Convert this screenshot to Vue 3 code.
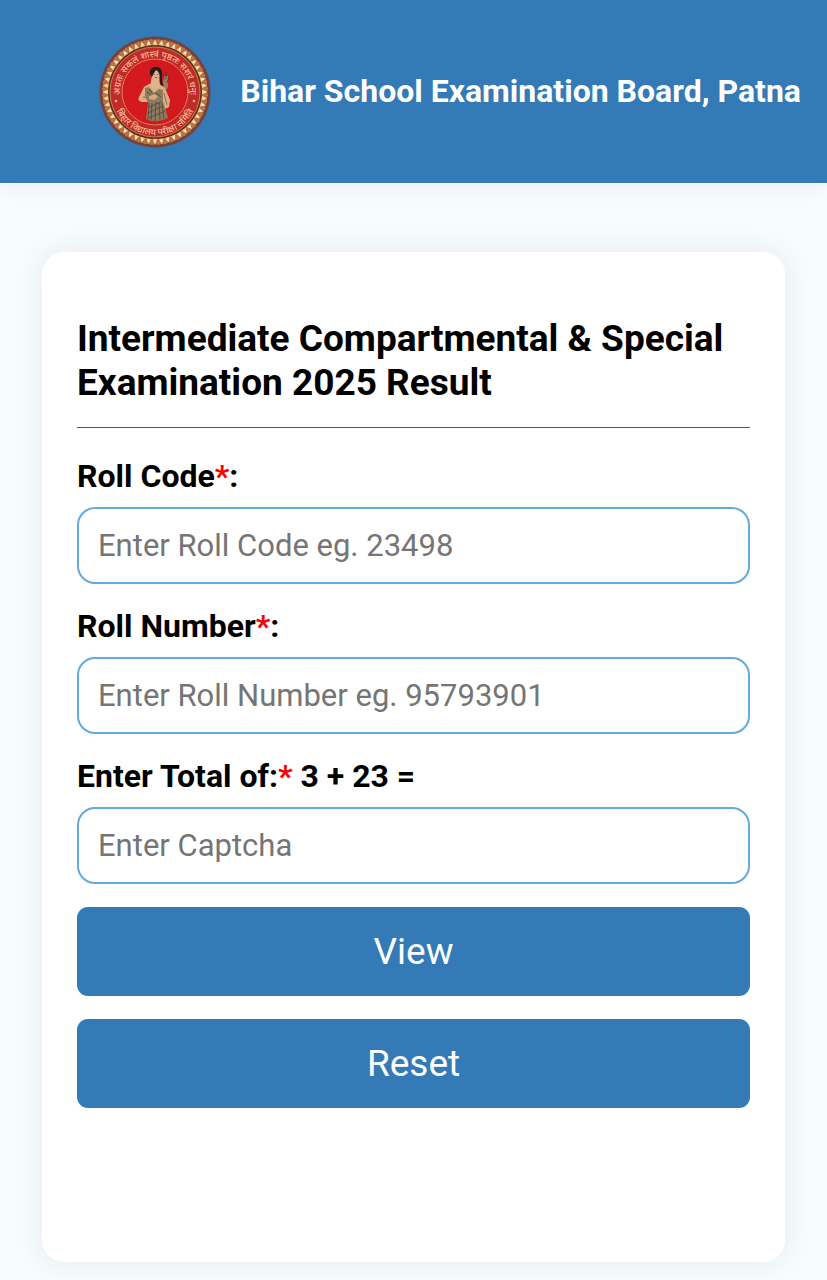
<script setup>
import { ref } from 'vue';

const rollCode = ref('');
const rollNumber = ref('');
const captcha = ref('');

const firstNumber = 3;
const secondNumber = 23;

// small petals of the emblem border
const rimPetals = Array.from({ length: 48 }, (_, i) => (i * 360) / 48);

const resetForm = () => {
  rollCode.value = '';
  rollNumber.value = '';
  captcha.value = '';
};
</script>

<template>
  <div class="page">
    <header class="header">
      <svg class="logo" viewBox="0 0 112 112" role="img" aria-label="Bihar School Examination Board">
        <defs>
          <path id="arc-top" d="M21.5 62 A35 35 0 1 1 90.5 62" />
          <path id="arc-bottom" d="M15.3 70 A43 43 0 0 0 96.7 70" />
        </defs>
        <circle cx="56" cy="56" r="55.5" fill="#75413c" />
        <circle cx="56" cy="56" r="49.5" fill="none" stroke="#b9713f" stroke-width="6" />
        <g v-for="angle in rimPetals" :key="angle" :transform="`rotate(${angle} 56 56)`">
          <path d="M53.6 9 L56 3.6 L58.4 9 Z" fill="#efc794" />
          <circle cx="56" cy="6.6" r="1.1" fill="#fff0d2" />
          <circle cx="59.2" cy="3.8" r="0.9" fill="#b9775c" />
        </g>
        <circle cx="56" cy="56" r="46.8" fill="#5f2f1c" />
        <circle cx="56" cy="56" r="45" fill="#c12a2a" stroke="#c99a55" stroke-width="0.8" />
        <circle cx="56" cy="56" r="33" fill="#d3191e" stroke="#e8795a" stroke-width="1" />
        <text class="motto">
          <textPath href="#arc-top" startOffset="50%" text-anchor="middle">अग्रतः सकलं शास्त्रं पृष्ठतः सशरं धनुः</textPath>
        </text>
        <text class="motto">
          <textPath href="#arc-bottom" startOffset="50%" text-anchor="middle">बिहार विद्यालय परीक्षा समिति</textPath>
        </text>
        <circle cx="17" cy="65" r="1.3" fill="#f0b183" />
        <circle cx="95" cy="65" r="1.3" fill="#f0b183" />
        <!-- quiver -->
        <path d="M63 50 L65 40 L69 40 L69 51 L66 56 Z" fill="#9a7f62" />
        <path d="M65 44 L64 38 M67 43 L67 36 M68 47 L70 41" fill="none" stroke="#4d3a30" stroke-width="0.9" />
        <!-- arms and shoulders -->
        <path d="M50 48 L60 48 L66 52 L71 64 L70 71 L66 73 L62 65 L50 66 L43 66 Q38 65 40 61 L45 51 Z" fill="#dcae83" />
        <path d="M53 40 L60 40 L61 50 L56 54 L51 50 Z" fill="#e0b48b" />
        <path d="M44 61 L52 63 L59 60 M65 57 L68 69" fill="none" stroke="#8c5738" stroke-width="0.8" />
        <!-- robe -->
        <path d="M46 52 L50 51 L55 57 L60 53 L64 54 L64 65 L69 82 Q58 88 47 83 L49 67 L46 60 Z" fill="#8d7b60" />
        <path d="M50 67 L49 83 M53 67 L52 84 M57 66 L56 85 M60 66 L61 84 M63 67 L65 83 M50 71 L62 66 M49 77 L64 70 M50 82 L66 75" fill="none" stroke="#4f4538" stroke-width="0.8" />
        <path d="M48 56 L53 60 L57 57 L62 61 M50 53 L53 57" fill="none" stroke="#5f4b38" stroke-width="1" />
        <!-- hands -->
        <path d="M50 60 L56 58 L59 61 L55 64 L50 63 Z" fill="#d9a97d" />
        <!-- head -->
        <ellipse cx="57" cy="38" rx="4" ry="5.4" fill="#e1b38b" />
        <path d="M51 38 Q50 31 57 31 Q64 31 63 39 Q62 45 65 50 Q60 49 61 43 Q61 36 57 34 Q54 38 53 41 Z" fill="#241b1a" />
        <path d="M54.5 38.5 L56 38.5 M58 38.5 L59.5 38.5 M56 41.6 L58.4 41.6" stroke="#65402d" stroke-width="0.7" />
      </svg>
      <h1>Bihar School Examination Board, Patna</h1>
    </header>

    <main>
      <form class="card" @submit.prevent @reset.prevent="resetForm">
        <h2>Intermediate Compartmental &amp; Special Examination 2025 Result</h2>

        <div class="field">
          <label for="roll-code">Roll Code<span class="required">*</span>:</label>
          <input id="roll-code" v-model="rollCode" type="text" placeholder="Enter Roll Code eg. 23498">
        </div>

        <div class="field">
          <label for="roll-number">Roll Number<span class="required">*</span>:</label>
          <input id="roll-number" v-model="rollNumber" type="text" placeholder="Enter Roll Number eg. 95793901">
        </div>

        <div class="field">
          <label for="captcha">Enter Total of:<span class="required">*</span> {{ firstNumber }} + {{ secondNumber }} =</label>
          <input id="captcha" v-model="captcha" type="text" placeholder="Enter Captcha">
        </div>

        <button type="submit" class="btn">View</button>
        <button type="reset" class="btn">Reset</button>
      </form>
    </main>
  </div>
</template>

<style>
body {
  margin: 0;
  background-color: #f7fcff;
}
</style>

<style scoped>
* {
  box-sizing: border-box;
}

.page {
  font-family: Roboto, "Noto Sans", sans-serif;
  color: #000;
}

/* Header */
.header {
  display: flex;
  align-items: center;
  gap: 29px;
  padding: 36px 16px 35px 12%;
  background-color: #337ab7;
  box-shadow: 0 4px 24px rgba(0, 0, 0, 0.06);
}

.logo {
  flex: none;
  width: 112px;
  height: 112px;
}

.motto {
  font-family: "Noto Sans", sans-serif;
  font-size: 9px;
  font-weight: 500;
  fill: #f5bd91;
}

h1 {
  margin: 0;
  padding-bottom: 2px;
  font-size: 32px;
  line-height: 38px;
  font-weight: 700;
  color: #fff;
}

/* Form card */
main {
  padding: 69px 42px 17px;
}

.card {
  display: flex;
  flex-direction: column;
  gap: 23px;
  padding: 65px 35px 154px;
  border-radius: 22px;
  background-color: #fff;
  box-shadow: 0 0 32px rgba(0, 0, 0, 0.08);
}

h2 {
  margin: 0 0 6px;
  padding-bottom: 22px;
  border-bottom: 1px solid #555;
  font-size: 37px;
  line-height: 44px;
  font-weight: 700;
}

.field {
  display: flex;
  flex-direction: column;
  gap: 12px;
}

label {
  font-size: 32px;
  line-height: 38px;
  font-weight: 700;
}

.required {
  color: #f00;
}

input {
  width: 100%;
  height: 77px;
  padding: 0 19px;
  border: 2px solid #67a9d8;
  border-radius: 18px;
  background-color: #fff;
  font-family: inherit;
  font-size: 31px;
  color: #000;
}

input::placeholder {
  color: #757575;
  opacity: 1;
}

.btn {
  height: 89px;
  border: none;
  border-radius: 11px;
  background-color: #337ab7;
  font-family: inherit;
  font-size: 37px;
  color: #fff;
  cursor: pointer;
}
</style>
